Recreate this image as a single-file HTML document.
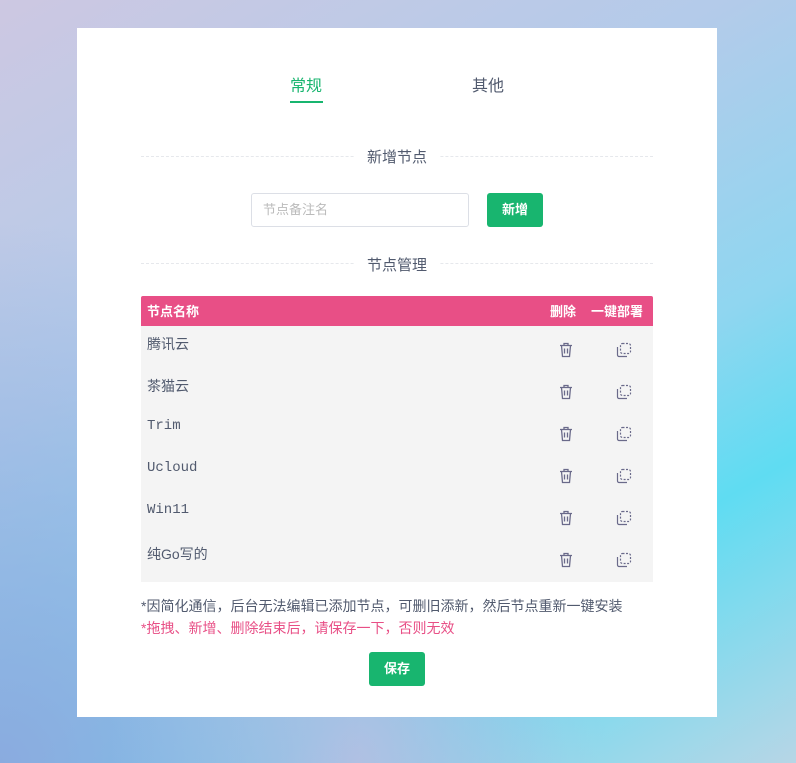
<!DOCTYPE html><html><head><meta charset="utf-8"><style>
body{margin:0;width:796px;height:763px;overflow:hidden;font-family:"Liberation Sans","Noto Sans CJK SC",sans-serif;
background:linear-gradient(150deg,#cdc8e2 0%,#b3cbea 35%,#8fd6f0 60%,#5fdcf2 75%,#b7d6e6 100%);position:relative}
.bg2{position:absolute;inset:0;background:radial-gradient(ellipse at 0% 100%,#8aabdf 0%,rgba(138,171,223,0) 50%)}
.bg3{position:absolute;inset:0;background:radial-gradient(ellipse at 45% 100%,rgba(190,190,225,0.8) 0%,rgba(190,190,225,0) 40%)}
.card{position:absolute;left:77px;top:28px;width:640px;height:689px;background:#fff}
.a{position:absolute}
.tab{font-size:16px;top:44px}
.div{position:absolute;left:64px;width:512px;border-top:1px dashed #e6e8ec}
.dt{position:absolute;background:#fff;padding:0 12px;font-size:15px;color:#515a6e;transform:translateX(-50%);left:320px}
.btn{background:#18b56f;color:#fff;font-size:13px;font-weight:bold;border-radius:3px;text-align:center}
.row{position:absolute;left:64px;width:512px;height:42px;font-size:14px;color:#515a6e}
.row span{position:absolute;left:6px;top:8px}
.mono{font-family:"Liberation Mono",monospace;color:#515a6e}
svg{position:absolute}
</style></head><body><div class="bg2"></div><div class="bg3"></div>
<div class="card">
<div class="a tab" style="left:213px;color:#18b56f">常规</div>
<div class="a" style="left:213px;top:73px;width:33px;height:2px;background:#18b56f"></div>
<div class="a tab" style="left:395px;color:#515a6e">其他</div>
<div class="div" style="top:128px"></div><div class="dt" style="top:118px">新增节点</div>
<div class="a" style="left:174px;top:165px;width:216px;height:32px;border:1px solid #dcdfe6;border-radius:3px;font-size:13px;color:#bbb;line-height:32px;text-indent:11px">节点备注名</div>
<div class="a btn" style="left:410px;top:165px;width:56px;height:34px;line-height:34px">新增</div>
<div class="div" style="top:235px"></div><div class="dt" style="top:226px">节点管理</div>
<div class="a" style="left:64px;top:268px;width:512px;height:30px;background:#e84f86;border-radius:2px 2px 0 0;color:#fff;font-size:13px;font-weight:bold;line-height:32px">
<span style="position:absolute;left:6px">节点名称</span><span style="position:absolute;left:409px">删除</span><span style="position:absolute;left:450px">一键部署</span></div>
<div class="a" style="left:64px;top:298px;width:512px;height:256px;background:#f4f4f4"></div>
<div class="row" style="top:298px"><span>腾讯云</span></div>
<div class="row" style="top:340px"><span>茶猫云</span></div>
<div class="row" style="top:382px"><span class="mono">Trim</span></div>
<div class="row" style="top:424px"><span class="mono">Ucloud</span></div>
<div class="row" style="top:466px"><span class="mono">Win11</span></div>
<div class="row" style="top:508px"><span>纯Go写的</span></div>
<div id="icons"></div>
<div class="a" style="left:64px;top:568px;font-size:14px;color:#515a6e">*因简化通信，后台无法编辑已添加节点，可删旧添新，然后节点重新一键安装</div>
<div class="a" style="left:64px;top:590px;font-size:14px;color:#e84f86">*拖拽、新增、删除结束后，请保存一下，否则无效</div>
<div class="a btn" style="left:292px;top:624px;width:56px;height:34px;line-height:34px">保存</div>
</div>
<script>
var h='';for(var i=0;i<6;i++){var y=314+i*42;
h+='<svg style="left:482px;top:'+y+'px" width="14" height="16" viewBox="0 0 14 16" fill="none" stroke="#6a6a8a" stroke-width="1.3"><path d="M1 3.5h12M5 3.5V1.5h4v2M2.5 3.5l1 11h7l1-11M5.5 6.5v5M8.5 6.5v5"/></svg>';
h+='<svg style="left:539px;top:'+(y)+'px" width="16" height="16" viewBox="0 0 16 16" fill="none" stroke="#6a6a8a" stroke-width="1.2"><rect x="4.5" y="1.5" width="10" height="10" rx="2" stroke-dasharray="2 1.5"/><path d="M1.5 5v8a1.5 1.5 0 0 0 1.5 1.5h8"/></svg>';}
document.getElementById('icons').innerHTML=h;
</script>
</body></html>
